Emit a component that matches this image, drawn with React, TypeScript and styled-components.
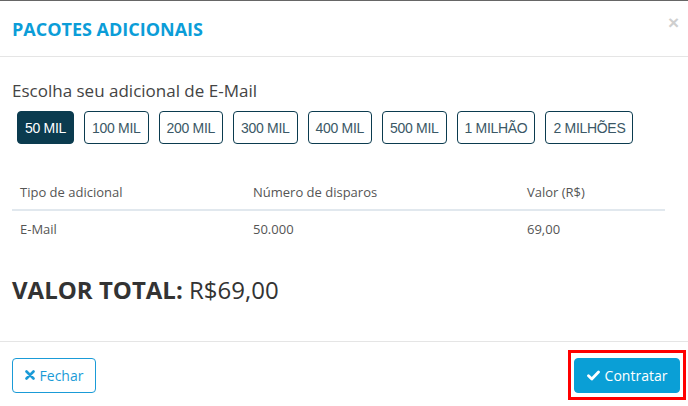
import styled, { createGlobalStyle } from "styled-components";
import { useState } from "react";

const GlobalStyle = createGlobalStyle`
  html, body {
    margin: 0;
    padding: 0;
    background: #fff;
  }
  body {
    font-family: "Open Sans", "Liberation Sans", Arial, sans-serif;
    color: #333;
  }
`;

const Modal = styled.div`
  width: 688px;
  height: 406px;
  box-sizing: border-box;
  border-top: 1px solid #666;
  background: #fff;
  display: flex;
  flex-direction: column;
`;

const Header = styled.div`
  height: 56px;
  box-sizing: border-box;
  padding: 0 12px;
  border-bottom: 1px solid #e5e5e5;
  display: flex;
  align-items: center;
  justify-content: space-between;
`;

const Title = styled.h4`
  margin: 0;
  font-size: 18px;
  font-weight: 700;
  color: #0b9dd8;
`;

const Close = styled.span`
  font-family: "Liberation Sans", Arial, sans-serif;
  font-size: 19px;
  font-weight: 700;
  color: #cfcfcf;
  margin-right: -3px;
  margin-top: -11px;
`;

const Body = styled.div`
  padding: 22px 12px 0;
  height: 285px;
  box-sizing: border-box;
  border-bottom: 1px solid #e5e5e5;
`;

const Lead = styled.div`
  font-size: 17px;
  color: #444;
  line-height: 24px;
`;

const Options = styled.div`
  display: flex;
  gap: 10px;
  margin: 8px 0 0 5px;
`;

const Option = styled.button<{ $active?: boolean }>`
  height: 33px;
  padding: 0 7px;
  border: 1px solid #0b3b4f;
  border-radius: 4px;
  background: ${(p) => (p.$active ? "#0b3b4f" : "#fff")};
  color: ${(p) => (p.$active ? "#fff" : "#3b5866")};
  font-family: "Liberation Sans", Arial, sans-serif;
  font-size: 14px;
  cursor: pointer;
  letter-spacing: -0.3px;
`;

const Table = styled.div`
  margin-top: 31px;
  width: 653px;
  font-size: 13px;
  color: #555;
`;

const Row = styled.div<{ $head?: boolean }>`
  display: grid;
  grid-template-columns: 233px 274px 1fr;
  height: ${(p) => (p.$head ? "34px" : "36px")};
  align-items: center;
  border-bottom: ${(p) => (p.$head ? "2px solid #e1e8ee" : "none")};
`;

const Cell = styled.div`
  padding-left: 8px;
`;

const Total = styled.div`
  margin-top: 26px;
  font-size: 24px;
  color: #333;
`;

const TotalLabel = styled.strong`
  font-weight: 700;
`;

const Footer = styled.div`
  display: flex;
  justify-content: space-between;
  align-items: center;
  padding: 8px 2px 0 12px;
`;

const Outline = styled.div`
  border: 3px solid #ff0000;
  padding: 5px 3px 4px;
`;

const Btn = styled.button<{ $primary?: boolean }>`
  height: 35px;
  display: flex;
  align-items: center;
  justify-content: center;
  gap: 5px;
  padding: 0;
  border-radius: 4px;
  font-family: "Open Sans", sans-serif;
  font-size: 14px;
  cursor: pointer;
  border: 1px solid ${(p) => (p.$primary ? "#0a9fd6" : "#1a9bd7")};
  background: ${(p) => (p.$primary ? "#0a9fd6" : "#fff")};
  color: ${(p) => (p.$primary ? "#fff" : "#1a9bd7")};
  width: ${(p) => (p.$primary ? "106px" : "84px")};
`;

const options = ["50 MIL", "100 MIL", "200 MIL", "300 MIL", "400 MIL", "500 MIL", "1 MILHÃO", "2 MILHÕES"];
const disparos = ["50.000", "100.000", "200.000", "300.000", "400.000", "500.000", "1.000.000", "2.000.000"];
const valores = ["69,00", "119,00", "219,00", "299,00", "379,00", "449,00", "849,00", "1.599,00"];

const TimesIcon = () => (
  <svg width="10" height="10" viewBox="0 0 10 10">
    <path d="M1.5 1.5 L8.5 8.5 M8.5 1.5 L1.5 8.5" stroke="currentColor" strokeWidth="2.6" strokeLinecap="round" />
  </svg>
);

const CheckIcon = () => (
  <svg width="13" height="11" viewBox="0 0 13 11">
    <path d="M1.5 5.8 L4.8 9 L11.5 2" stroke="currentColor" strokeWidth="2.8" fill="none" strokeLinecap="round" strokeLinejoin="round" />
  </svg>
);

const App = () => {
  const [selected, setSelected] = useState(0);

  return (
    <>
      <GlobalStyle />
      <Modal>
        <Header>
          <Title>PACOTES ADICIONAIS</Title>
          <Close>×</Close>
        </Header>
        <Body>
          <Lead>Escolha seu adicional de E-Mail</Lead>
          <Options>
            {options.map((o, i) => (
              <Option key={o} $active={i === selected} onClick={() => setSelected(i)}>
                {o}
              </Option>
            ))}
          </Options>
          <Table>
            <Row $head>
              <Cell>Tipo de adicional</Cell>
              <Cell>Número de disparos</Cell>
              <Cell>Valor (R$)</Cell>
            </Row>
            <Row>
              <Cell>E-Mail</Cell>
              <Cell>{disparos[selected]}</Cell>
              <Cell>{valores[selected]}</Cell>
            </Row>
          </Table>
          <Total>
            <TotalLabel>VALOR TOTAL:</TotalLabel> R${valores[selected]}
          </Total>
        </Body>
        <Footer>
          <Btn>
            <TimesIcon />
            Fechar
          </Btn>
          <Outline>
            <Btn $primary>
              <CheckIcon />
              Contratar
            </Btn>
          </Outline>
        </Footer>
      </Modal>
    </>
  );
};

export default App;
